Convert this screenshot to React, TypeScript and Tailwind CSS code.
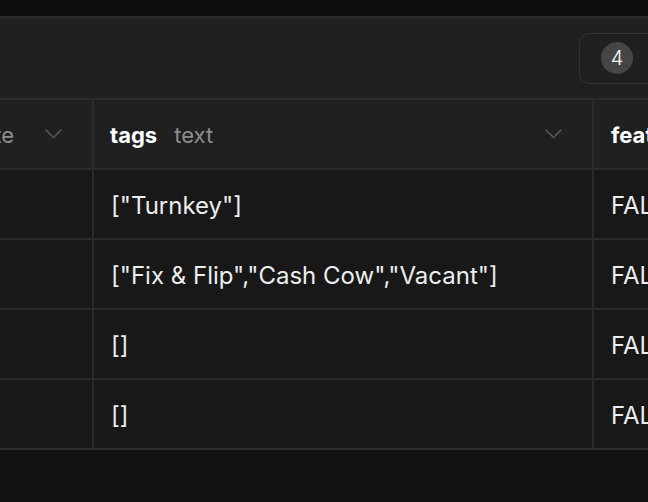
import React from "react";

const Chevron = () => (
  <svg width="17" height="10" viewBox="0 0 17 10" fill="none" className="shrink-0">
    <polyline points="1,1 8.5,8.5 16,1" stroke="#575757" strokeWidth="1.6" strokeLinecap="round" strokeLinejoin="round" />
  </svg>
);

const rows = [
  '["Turnkey"]',
  '["Fix & Flip","Cash Cow","Vacant"]',
  "[]",
  "[]",
];

export default function App() {
  return (
    <div className="w-[648px] h-[502px] overflow-hidden bg-[#121212] flex flex-col font-['Inter','Liberation_Sans',sans-serif]">
      <div className="h-[16px] shrink-0 bg-[#0e0e0e]" />
      <div className="h-[84px] shrink-0 border-y-2 border-[#2b2b2b] bg-[#202020] flex items-center justify-end overflow-hidden">
        <div className="-mr-[51px] w-[120px] h-[51px] shrink-0 rounded-[10px] border-[1.5px] border-[#333333] flex items-center pl-[21px]">
          <div className="w-8 h-8 rounded-full bg-[#454545] flex items-center justify-center text-white text-[20px] font-light leading-none">
            4
          </div>
        </div>
      </div>
      <div className="flex flex-col overflow-hidden">
        <div className="h-[70px] shrink-0 flex border-b-2 border-[#2b2b2b] bg-[#202020]">
          <div className="w-[94px] shrink-0 border-r-2 border-[#2b2b2b] flex items-center justify-end overflow-hidden pr-[30px]">
            <span className="shrink-0 pt-[2px] text-white font-bold text-[22px] whitespace-nowrap">listed_at</span>
            <span className="shrink-0 pt-[2px] ml-[17px] text-[#8e8e8e] text-[22px] whitespace-nowrap">date</span>
            <span className="ml-[31px] shrink-0 flex"><Chevron /></span>
          </div>
          <div className="w-[500px] shrink-0 border-r-2 border-[#2b2b2b] flex items-center pl-[16px] pr-[30px]">
            <span className="pt-[2px] text-white font-bold text-[22px]">tags</span>
            <span className="pt-[2px] ml-[17px] text-[#8e8e8e] text-[22px]">text</span>
            <span className="ml-auto flex"><Chevron /></span>
          </div>
          <div className="w-[300px] shrink-0 flex items-center pl-[17px]">
            <span className="pt-[2px] text-white font-bold text-[22px] whitespace-nowrap">featured</span>
            <span className="pt-[2px] ml-[17px] text-[#8e8e8e] text-[22px]">bool</span>
          </div>
        </div>
        {rows.map((r, i) => (
          <div key={i} className="h-[70px] shrink-0 flex border-b-2 border-[#2b2b2b] bg-[#181818]">
            <div className="w-[94px] shrink-0 border-r-2 border-[#2b2b2b]" />
            <div className="w-[500px] shrink-0 border-r-2 border-[#2b2b2b] flex items-center pt-[3px] pl-[17px] text-[24px] text-[#ededed] whitespace-nowrap">
              {r}
            </div>
            <div className="w-[300px] shrink-0 flex items-center pt-[3px] pl-[17px] text-[24px] text-[#ededed]">
              FALSE
            </div>
          </div>
        ))}
      </div>
    </div>
  );
}
